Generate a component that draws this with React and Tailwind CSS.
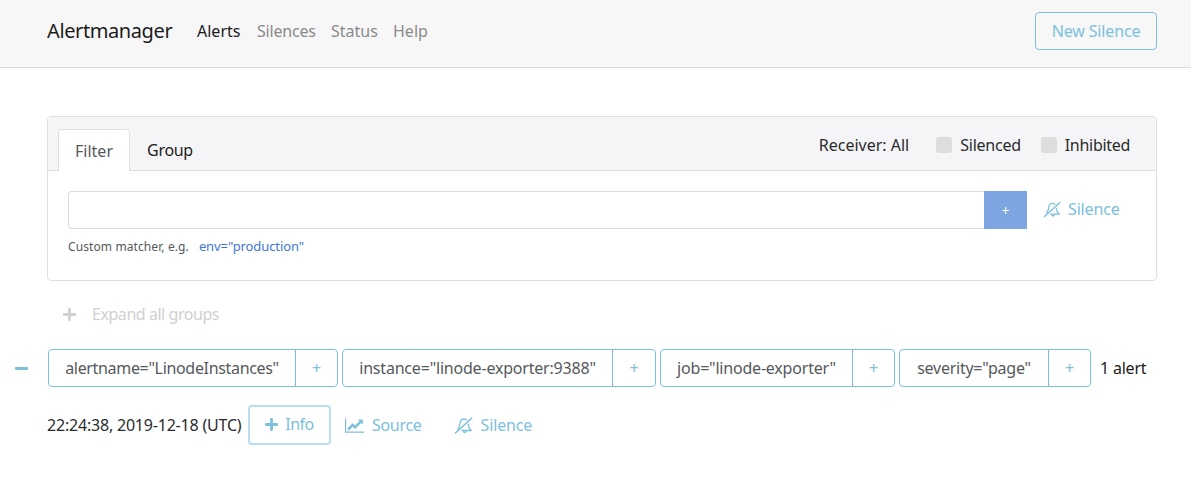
import { FaPlus, FaMinus } from "react-icons/fa";

const LABELS = [
  { text: 'alertname="LinodeInstances"', w: "w-[247px] tracking-[-0.33px]", plus: "w-[41px]" },
  { text: 'instance="linode-exporter:9388"', w: "w-[270px] tracking-[-0.2px]", plus: "w-[42px]" },
  { text: 'job="linode-exporter"', w: "w-[192px] tracking-[-0.2px]", plus: "w-[41px]" },
  { text: 'severity="page"', w: "w-[149px] tracking-[-0.25px]", plus: "w-[41px]" },
];

function BellSlash({ className }) {
  return (
    <svg viewBox="0 0 19 17" fill="none" stroke="currentColor" strokeWidth="1.3" className={className}>
      <path d="M3.5 12.5c1.6-1.7 2.4-3.9 2.6-6.3C6.3 3.4 8 2 10 2c1.3 0 2.4.5 3.1 1.4" />
      <path d="M13.9 6.6c.3 2.8 1.3 5 3.1 6.9H7.5" />
      <path d="M1 16.4 18.2.8" strokeWidth="1.5" />
      <path d="M8.6 14.2c.1 1 1 1.8 2 1.8s1.800-.8 2-1.800z" fill="currentColor" stroke="none" />
    </svg>
  );
}

function LineChart({ className }) {
  return (
    <svg viewBox="0 0 2048 1792" fill="currentColor" className={className}>
      <path d="M2048 1536v128h-2048v-1536h128v1408h1920zm-128-1248v435q0 21-19.5 29.5t-35.5-7.500l-121-121-633 633q-10 10-23 10t-23-10l-233-233-416 416-192-192 585-585q10-10 23-10t23 10l233 233 464-464-121-121q-16-16-7.500-35.500t29.500-19.500h435q14 0 23 9t9 23z" />
    </svg>
  );
}

function MatcherGroup({ text, w, plus }) {
  return (
    <div className="flex h-[38px] rounded-[4px] border border-[#7cc0dc]">
      <div className={`${w} flex items-center justify-center border-r border-[#7cc0dc] text-[#55595c] whitespace-nowrap`}>
        {text}
      </div>
      <div className={`${plus} flex items-center justify-center text-[#7cc0dc]`}>+</div>
    </div>
  );
}

export default function App() {
  return (
    <div className="min-h-[480px] bg-white text-[16px] text-[#292b2c] font-['Noto_Sans',sans-serif]">
      {/* navbar */}
      <header className="flex h-[68px] items-center justify-between border-b border-[#dadada] bg-[#f7f7f7] pb-[5px] pl-[47px] pr-[34px]">
        <div className="flex items-center">
          <span className="w-[150px] text-[20px] tracking-[-0.4px] text-[#1c1c1c]">Alertmanager</span>
          <nav className="flex items-center">
            <a className="w-[60px] text-[#1c1c1c]">Alerts</a>
            <a className="w-[74px] tracking-[-0.2px] text-[#8a8a8a]">Silences</a>
            <a className="w-[62px] text-[#8a8a8a]">Status</a>
            <a className="text-[#8a8a8a]">Help</a>
          </nav>
        </div>
        <button className="h-[38px] w-[122px] rounded-[4px] border border-[#7cc0dc] tracking-[-0.15px] text-[#7cc0dc]">New Silence</button>
      </header>

      <main className="pl-[47px] pr-[34px] pt-[48px]">
        {/* filter panel */}
        <section className="h-[165px] rounded-[4px] border border-[#dedede]">
          <div className="flex h-[54px] items-end justify-between border-b border-[#dedede] bg-[#f5f5f7] pl-[10px] pr-[26px]">
            <div className="flex">
              <div className="-mb-px flex h-[42px] w-[72px] items-center justify-center rounded-t-[4px] border border-b-0 border-[#dedede] bg-white text-[#55595c]">
                Filter
              </div>
              <div className="-mb-px flex h-[42px] w-[80px] items-center justify-center tracking-[-0.3px] text-[#1c1c1c]">Group</div>
            </div>
            <div className="flex h-[54px] items-center pt-[3px]">
              <span className="mr-[27px]">Receiver: All</span>
              <span className="mr-[4px] h-[16px] w-[16px] rounded-[3px] bg-[#dddddd]" />
              <span className="ml-[4px] mr-[20px] tracking-[-0.25px]">Silenced</span>
              <span className="mr-[4px] h-[16px] w-[16px] rounded-[3px] bg-[#dddddd]" />
              <span className="ml-[4px] tracking-[-0.3px]">Inhibited</span>
            </div>
          </div>
          <div className="flex items-start pl-[20px] pt-[20px]">
            <div className="w-[959px]">
              <div className="flex h-[38px]">
                <div className="w-[916px] rounded-l-[4px] border border-r-0 border-[#dadada]" />
                <div className="flex w-[43px] items-center justify-center bg-[#7ca5e2] text-[14px] text-white">+</div>
              </div>
              <p className="mt-[8px] flex items-center text-[12px] tracking-[0.1px] text-[#55595c]">
                Custom matcher, e.g.
                <span className="ml-[10px] text-[13px] tracking-[-0.1px] text-[#3f77d6]">env="production"</span>
              </p>
            </div>
            <a className="ml-[16px] flex h-[36px] items-center tracking-[-0.15px] text-[#7cc0dc]">
              <BellSlash className="mr-[7px] h-[17px] w-[18px]" />
              Silence
            </a>
          </div>
        </section>

        {/* expand */}
        <div className="mt-[21px] flex h-[24px] items-center pl-[16px] tracking-[-0.45px] text-[#d0d0d0]">
          <FaPlus className="mr-[16px] h-[15px] w-[13px]" />
          Expand all groups
        </div>

        {/* alert group */}
        <div className="-ml-[32px] mt-[23px] flex items-center">
          <FaMinus className="mr-[20px] h-[15px] w-[13px] text-[#7cc0dc]" />
          <div className="flex shrink-0 gap-[4px]">
            {LABELS.map((l) => (
              <MatcherGroup key={l.text} {...l} />
            ))}
          </div>
          <span className="ml-[9px] whitespace-nowrap tracking-[-0.2px] text-[#1c1c1c]">1 alert</span>
        </div>

        <div className="mt-[18px] flex items-center">
          <span className="w-[201px] whitespace-nowrap tracking-[-0.2px] text-[#292b2c]">22:24:38, 2019-12-18 (UTC)</span>
          <button className="flex h-[40px] w-[83px] items-center justify-center rounded-[4px] border-2 border-[#b8deed] pb-[2px] text-[#7cc0dc]">
            <FaPlus className="mr-[7px] h-[15px] w-[13px]" />
            <span className="tracking-[-0.5px]">Info</span>
          </button>
          <a className="ml-[14px] flex items-center tracking-[-0.3px] text-[#7cc0dc]">
            <LineChart className="mr-[8px] h-[17px] w-[19px]" />
            Source
          </a>
          <a className="ml-[32px] flex items-center tracking-[-0.15px] text-[#7cc0dc]">
            <BellSlash className="mr-[8px] h-[17px] w-[19px]" />
            Silence
          </a>
        </div>
      </main>
    </div>
  );
}
